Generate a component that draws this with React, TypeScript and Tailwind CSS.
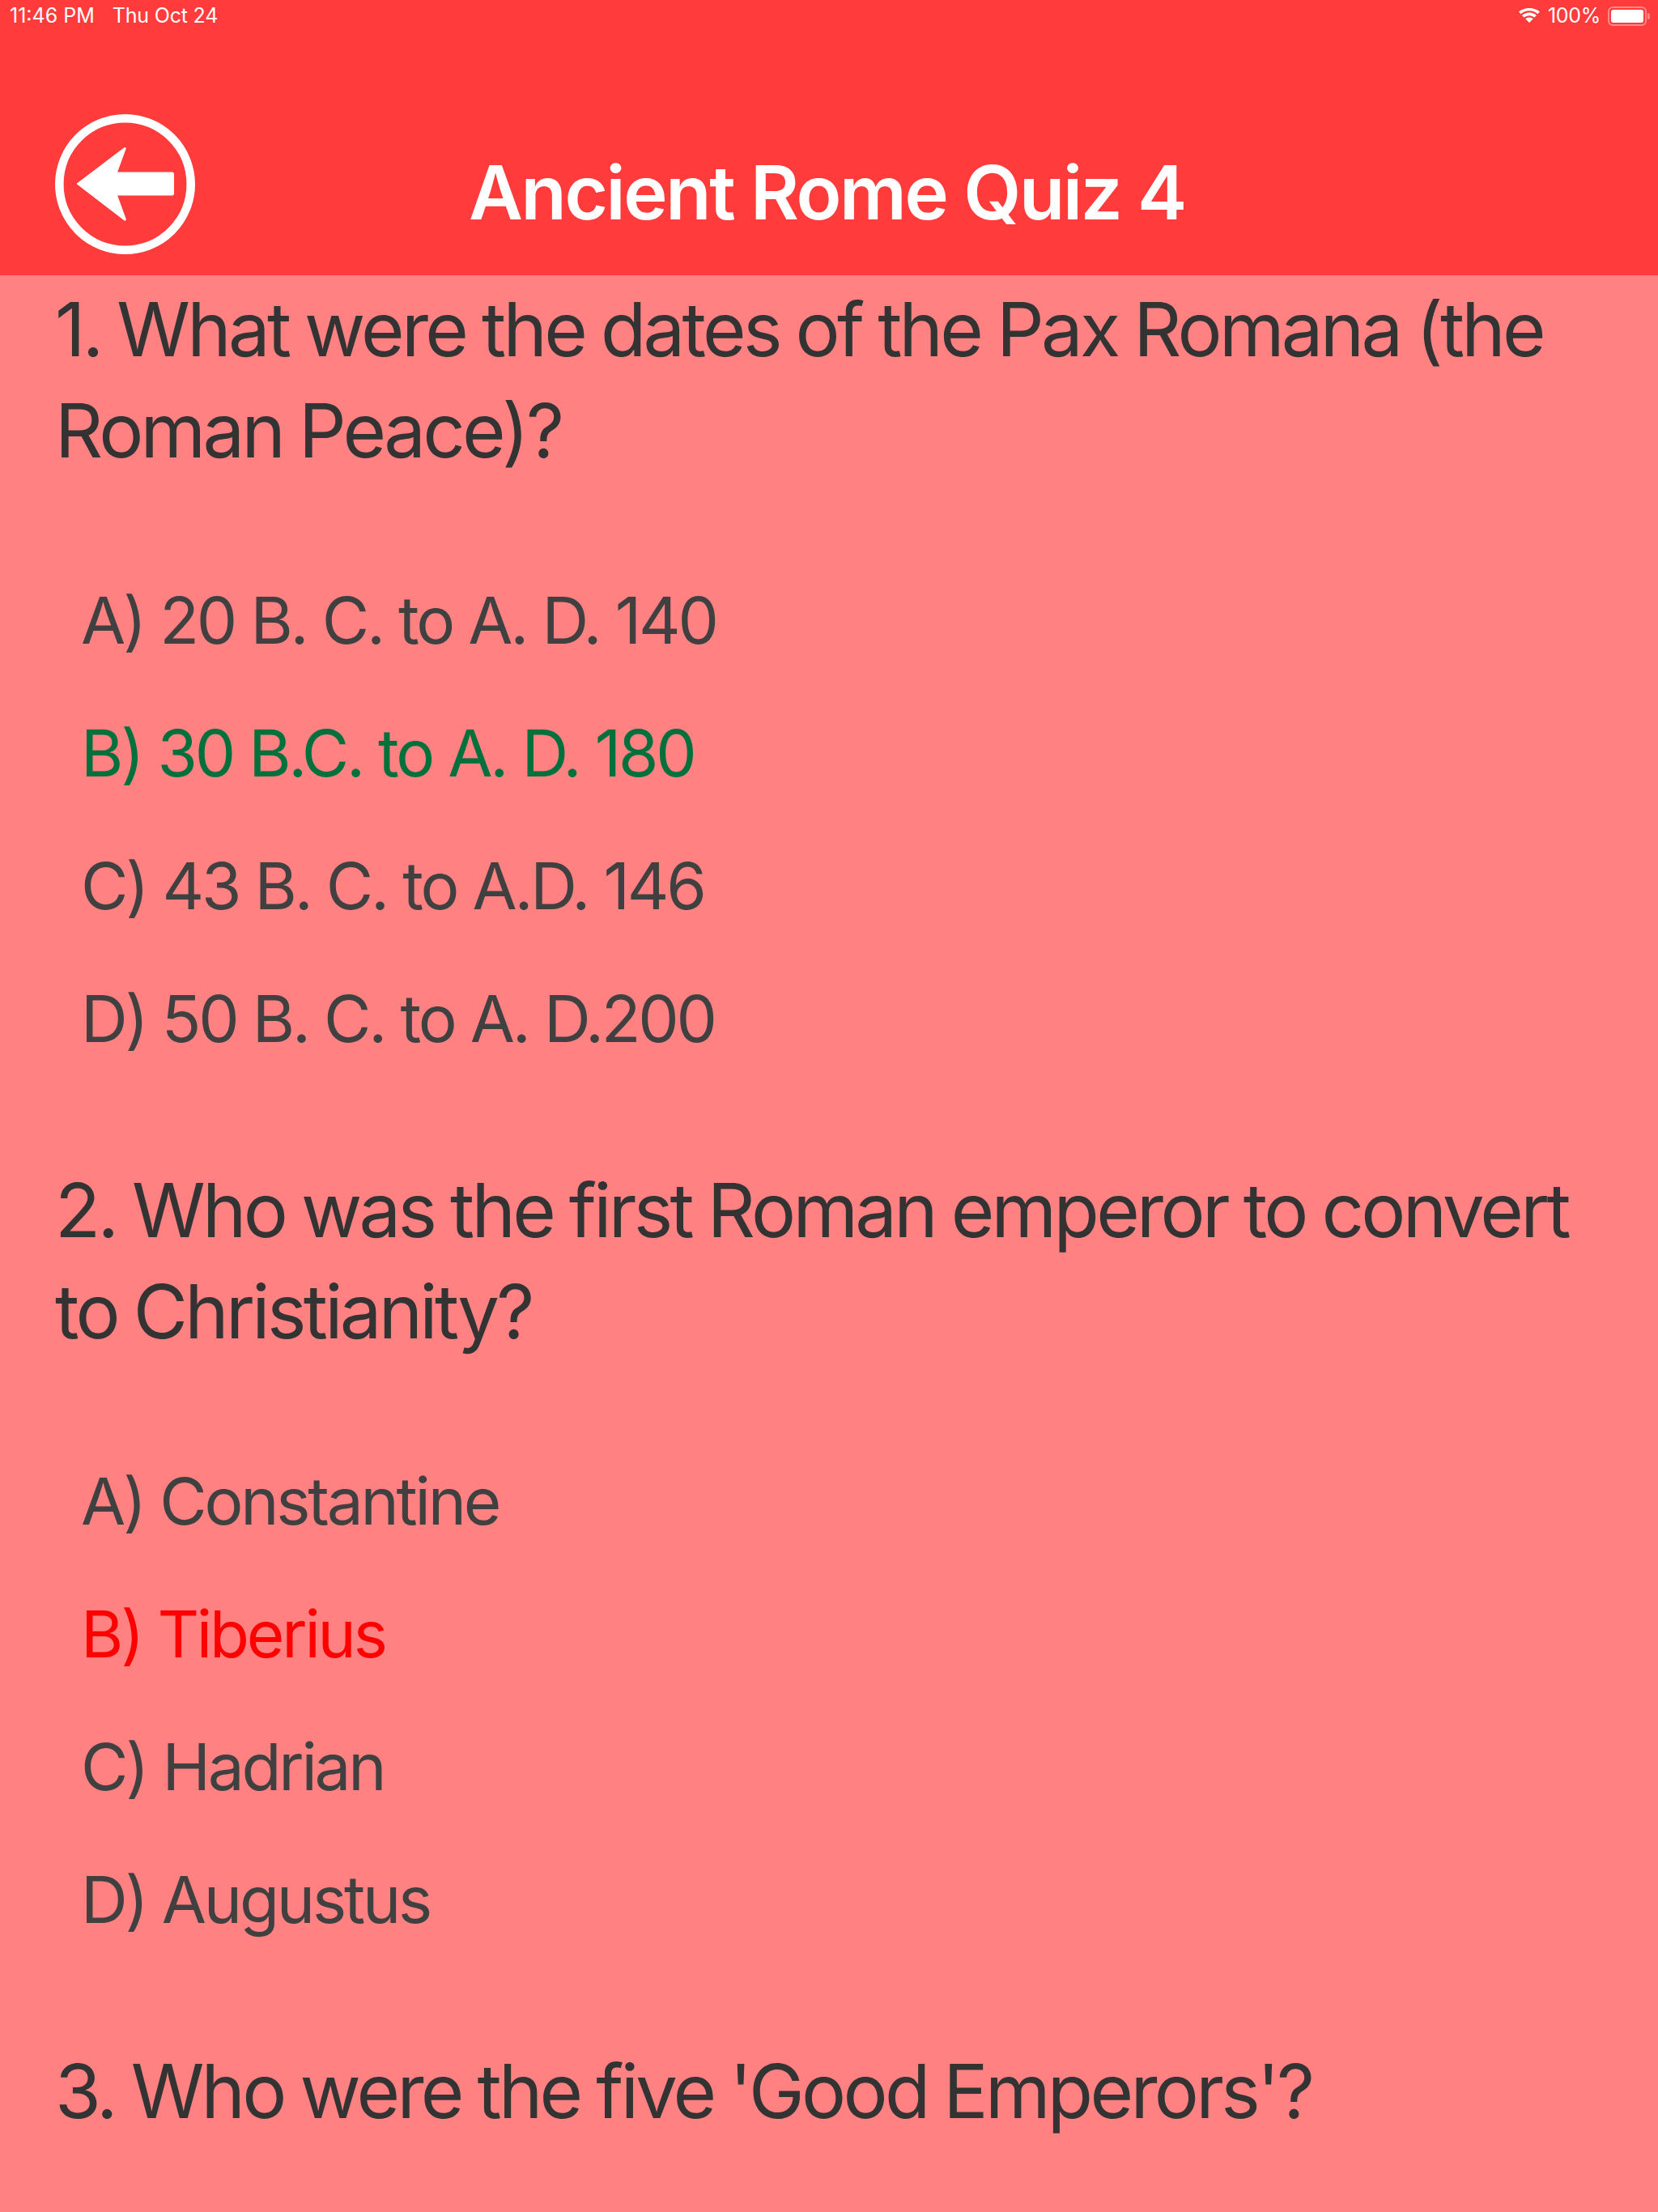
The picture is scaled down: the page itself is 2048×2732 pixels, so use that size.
import React from 'react';

interface Question {
  title: string;
  options: { text: string; color?: string }[];
}

const questions: Question[] = [
  {
    title: '1. What were the dates of the Pax Romana (the Roman Peace)?',
    options: [
      { text: 'A) 20 B. C. to A. D. 140' },
      { text: 'B) 30 B.C. to A. D. 180', color: 'text-[#00703c]' },
      { text: 'C) 43 B. C. to A.D. 146' },
      { text: 'D) 50 B. C. to A. D.200' },
    ],
  },
  {
    title: '2. Who was the first Roman emperor to convert to Christianity?',
    options: [
      { text: 'A) Constantine' },
      { text: 'B) Tiberius', color: 'text-[#ff0000]' },
      { text: 'C) Hadrian' },
      { text: 'D) Augustus' },
    ],
  },
  { title: "3. Who were the five 'Good Emperors'?", options: [] },
];

const BackIcon = () => (
  <svg viewBox="0 0 173 173" className="w-[173px] h-[173px]">
    <circle cx="86.500" cy="86.500" r="81.200" fill="none" stroke="#fff" strokeWidth="10.600" />
    <path
      d="M27 86 L85 42 Q88 40.500 87 43 L76.500 72 L145 72 Q146.500 72 146.500 74 L146.500 98 Q146.500 100 145 100 L76.500 100 L87 129 Q88 132.500 85 130.500 Z"
      fill="#fff"
      stroke="#fff"
      strokeWidth="1"
      strokeLinejoin="round"
    />
  </svg>
);

const StatusBar = () => (
  <div className="h-[40px] flex items-center justify-between pl-[12px] pr-[10px] text-white text-[25px] font-['Inter',sans-serif]">
    <div className="flex gap-[22px]">
      <span>11:46 PM</span>
      <span className="tracking-[-0.2px]">Thu Oct 24</span>
    </div>
    <div className="flex items-center gap-[9px]">
      <svg viewBox="0 0 28 20" className="w-[28px] h-[20px]" fill="#fff">
        <path d="M14 3.200c4 0 7.600 1.500 10.400 4L27 4.500C23.500 1.500 19 0 14 0S4.500 1.500 1 4.500L3.600 7.200C6.400 4.700 10 3.200 14 3.200z" />
        <path d="M14 9.200c2.500 0 4.700 1 6.400 2.400L23 9c-2.400-2.100-5.500-3.400-9-3.400S7.400 6.900 5 9l2.600 2.600C9.300 10.200 11.500 9.200 14 9.200z" />
        <path d="M14 11.500c-1.900 0-3.500.7-4.700 1.800L14 18l4.700-4.700c-1.200-1.100-2.800-1.800-4.700-1.800z" />
      </svg>
      <span className="tracking-[-0.3px]">100%</span>
      <div className="flex items-center">
        <div className="w-[48px] h-[24px] rounded-[6px] border-2 border-white/40 p-[2px]">
          <div className="w-full h-full rounded-[3px] bg-white" />
        </div>
        <div className="w-[3px] h-[8px] ml-[1px] rounded-r-full bg-white/40" />
      </div>
    </div>
  </div>
);

const App = () => {
  return (
    <div className="h-[2732px] overflow-hidden bg-[#ff8181] font-['Inter',sans-serif]">
      <header className="h-[340px] bg-[#ff3b3b]">
        <StatusBar />
        <div className="flex items-center pl-[68px] mt-[101px]">
          <BackIcon />
          <h1 className="ml-[338px] mt-[21px] text-[92px] leading-none font-semibold text-white tracking-[-2.4px]">
            Ancient Rome Quiz 4
          </h1>
        </div>
      </header>

      <div className="pl-[68px] pr-[70px] pt-[4px]">
        {questions.map((q) => (
          <div key={q.title} className="mb-[92px]">
            <h2 className="text-[92px] leading-[125px] text-[#333333] tracking-[-3.7px] [word-spacing:-2.4px]">{q.title}</h2>
            {q.options.length > 0 && (
              <ul className="mt-[90px] pl-[32px]">
                {q.options.map((o) => (
                  <li
                    key={o.text}
                    className={`h-[164px] flex items-center text-[80px] tracking-[-3.2px] ${o.color ?? 'text-[#404040]'}`}
                  >
                    {o.text}
                  </li>
                ))}
              </ul>
            )}
          </div>
        ))}
      </div>
    </div>
  );
};

export default App;
